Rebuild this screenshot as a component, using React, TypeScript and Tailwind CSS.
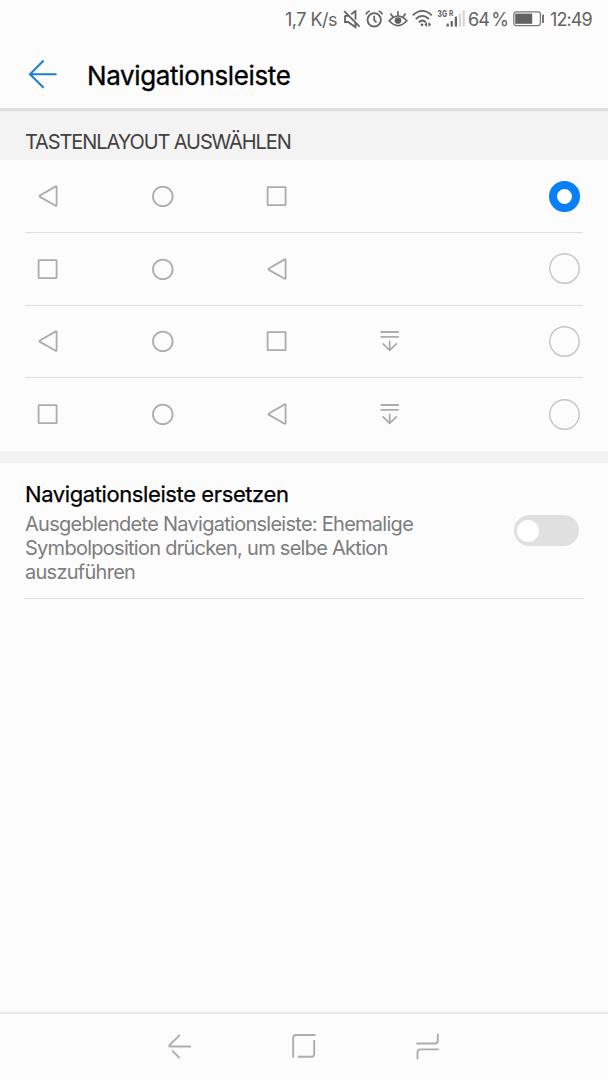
import React from "react";

type Glyph = "back" | "home" | "recent" | "panel";

const LAYOUTS: { keys: Glyph[]; selected: boolean }[] = [
  { keys: ["back", "home", "recent"], selected: true },
  { keys: ["recent", "home", "back"], selected: false },
  { keys: ["back", "home", "recent", "panel"], selected: false },
  { keys: ["recent", "home", "back", "panel"], selected: false },
];

function KeyIcon({ kind }: { kind: Glyph }) {
  return (
    <svg className="h-6 w-6" viewBox="0 0 24 24" fill="none" stroke="#acacac" strokeWidth="1.8" strokeLinejoin="round" strokeLinecap="round">
      {kind === "back" && <path d="M20.6 2.9V21.2a.6.6 0 0 1-.9.5L3.9 12.9a.8.8 0 0 1 0-1.4L19.7 2.4a.6.6 0 0 1 .9.5Z" />}
      {kind === "home" && <circle cx="11.8" cy="12.4" r="9.8" />}
      {kind === "recent" && <rect x="2.6" y="3.2" width="18" height="18" rx="0.5" />}
      {kind === "panel" && <path d="M1.2 3H18.2M1.2 7.8H18.2M9.7 12.5V21M3.1 14.9L9.7 21.3L16.3 14.9" />}
    </svg>
  );
}

function StatusBar() {
  return (
    <div className="flex h-10 items-center text-[18px] leading-10 text-[#626262]">
      <span className="ml-[285px] w-[58px] whitespace-nowrap tracking-[-0.5px]">1,7 K/s</span>
      <svg className="h-5 w-[18px]" viewBox="0 0 18 20" fill="none" stroke="#626262" strokeWidth="1.8">
        <path d="M1.2 1.2L16.6 16.6M2 5.6V12H5.2L12.5 17.2V13M12.5 9.5V1L8.2 4.3M2 5.8H5.6" />
      </svg>
      <svg className="ml-[4px] h-5 w-[19px]" viewBox="0 0 19 20" fill="none" stroke="#626262" strokeWidth="1.8">
        <circle cx="9.2" cy="9.8" r="6.7" />
        <path d="M9.2 5.8V10.1L11.5 12.5M1 4.4Q2 1.8 4.8 1M13.6 1Q16.4 1.8 17.4 4.4" />
      </svg>
      <svg className="ml-[4px] h-5 w-[20px]" viewBox="0 0 20 20" fill="none" stroke="#626262" strokeWidth="1.7">
        <path d="M1.2 10.8Q10 1.2 18.8 10.8Q10 20.4 1.2 10.8ZM10 5.5V1.2M4.8 6.8L2.4 3.6M15.2 6.8L17.6 3.6" />
        <circle cx="10" cy="10.6" r="3.3" fill="#626262" stroke="none" />
      </svg>
      <svg className="ml-[4px] h-5 w-[21px]" viewBox="0 0 21 20" fill="none" stroke="#626262" strokeWidth="1.8">
        <path d="M.8 5.4Q10.3-3.6 19.8 5.4M3.8 9Q10.3 2.7 16.8 9M6.8 12.4Q10.3 8.6 13.8 12.4" />
        <circle cx="10" cy="14.8" r="1.4" fill="#626262" stroke="none" />
        <path d="M15 12V17L12.4 14.5ZM16.4 12V17L19.2 14.5Z" fill="#626262" stroke="none" />
      </svg>
      <svg className="ml-[4px] h-[30px] w-[29px] overflow-visible" viewBox="0 -5 29 30" fill="#626262">
        <text x="0.5" y="7.3" fontSize="9.5" fontWeight="700" textLength="9.5" lengthAdjust="spacingAndGlyphs">3G</text>
        <text x="12" y="6" fontSize="7.5" fontWeight="700" textLength="4.3" lengthAdjust="spacingAndGlyphs">R</text>
        <rect x="9.6" y="13.6" width="2.2" height="3" />
        <rect x="13.6" y="11.1" width="2.2" height="5.5" />
        <rect x="17.8" y="6.6" width="2.2" height="10" />
        <rect x="21.8" y="3.6" width="2.2" height="13" fill="#d5d5d5" />
        <rect x="25.6" y="0.4" width="2.2" height="16.2" fill="#d5d5d5" />
      </svg>
      <span className="ml-[2px] w-[45px] whitespace-nowrap tracking-[-1px] [word-spacing:-1.5px]">64 %</span>
      <svg className="h-5 w-[32px]" viewBox="0 0 32 20" fill="none">
        <rect x="0.8" y="1.8" width="26.6" height="13.8" rx="2.5" stroke="#777" strokeWidth="1.2" />
        <rect x="2.2" y="3.6" width="17" height="10.2" fill="#626262" />
        <rect x="29" y="4.6" width="2" height="8.4" fill="#777" />
      </svg>
      <span className="ml-[5px] whitespace-nowrap tracking-[-0.9px]">12:49</span>
    </div>
  );
}

function Radio({ selected }: { selected: boolean }) {
  return selected ? (
    <span className="h-[31px] w-[31px] rounded-full border-8 border-[#087ff5] bg-white" />
  ) : (
    <svg className="h-[31px] w-[31px]" viewBox="0 0 31 31" fill="none">
      <circle cx="15.5" cy="15.5" r="14.7" stroke="#c4c4c4" strokeWidth="1.4" />
    </svg>
  );
}

export default function App() {
  return (
    <div className="flex h-[1080px] w-[608px] flex-col overflow-hidden bg-[#fcfcfc] font-[Inter,'Liberation_Sans',sans-serif]">
      <StatusBar />
      <header className="flex h-[68px] items-center pl-7">
        <svg className="h-[30px] w-[30px]" viewBox="0 0 30 30" fill="none" stroke="#1b7fce" strokeWidth="2">
          <path d="M28.6 15.2H2M15.6 1.5L2 15.2L15.6 28.8" />
        </svg>
        <h1 className="ml-[29px] mt-[3px] whitespace-nowrap text-[26px] font-normal tracking-[-0.36px] text-black [-webkit-text-stroke:0.3px]">Navigationsleiste</h1>
      </header>
      <div className="h-[3px] bg-[#dedede]" />
      <h2 className="h-[49px] whitespace-nowrap bg-[#f3f3f3] pl-[25px] pt-[16px] text-[20px] font-normal leading-[30px] tracking-[-1.1px] text-[#414141]">TASTENLAYOUT AUSWÄHLEN</h2>
      <div className="flex h-[291px] flex-col px-[25px] pt-[0.5px]" role="radiogroup">
        {LAYOUTS.map((layout, i) => (
          <div key={i} role="radio" aria-checked={layout.selected} className={`flex h-[72.5px] items-center justify-between pr-[3px] ${i < 3 ? "border-b border-[#e0e0e0]" : ""}`}>
            <div className="flex gap-[90.5px] pl-[11px]">
              {layout.keys.map((k) => <KeyIcon key={k} kind={k} />)}
            </div>
            <Radio selected={layout.selected} />
          </div>
        ))}
      </div>
      <div className="h-3 bg-[#f3f3f3]" />
      <section className="mx-[25px] flex h-[136px] border-b border-[#dedede]">
        <div className="flex-1 whitespace-nowrap pt-[16px]">
          <h3 className="text-[22px] font-normal leading-[30px] tracking-[-0.4px] text-black [-webkit-text-stroke:0.25px]">Navigationsleiste ersetzen</h3>
          <p className="mt-[3px] text-[20px] leading-[24px] tracking-[-0.73px] text-[#7d7d7d]">
            Ausgeblendete Navigationsleiste: Ehemalige<br />Symbolposition drücken, um selbe Aktion<br />auszuführen
          </p>
        </div>
        <div role="switch" aria-checked="false" className="mr-[4.5px] mt-[52px] flex h-[31px] w-[65px] items-center rounded-full bg-[#e0e0e0] pl-[3px]">
          <span className="h-[22px] w-[22px] rounded-full bg-white" />
        </div>
      </section>
      <nav className="mt-auto flex h-[68px] items-start border-t-2 border-[#e8e8e8] pl-[165px] pt-[19px]">
        <svg className="h-[30px] w-[30px]" viewBox="0 0 30 30" fill="none" stroke="#adadad" strokeWidth="1.9">
          <path d="M14.8 1.8L4.6 12Q3.5 13.5 5 13.5H26M7.2 17.6L14.6 25" />
        </svg>
        <svg className="ml-[94px] h-[30px] w-[30px]" viewBox="0 0 30 30" fill="none" stroke="#adadad" strokeWidth="1.9">
          <path d="M4.2 24.8V4.8Q4.2 2 7 2H26.4M25.2 7V21Q25.2 23.8 22.4 23.8H8.8" />
        </svg>
        <svg className="ml-[94px] h-[30px] w-[30px]" viewBox="0 0 30 30" fill="none" stroke="#adadad" strokeWidth="1.9">
          <path d="M3.4 10.5H21.8Q24.8 10.5 24.8 7.5V.8M25.8 16.4H7.5Q4.5 16.4 4.5 19.4V26.3" />
        </svg>
      </nav>
    </div>
  );
}
